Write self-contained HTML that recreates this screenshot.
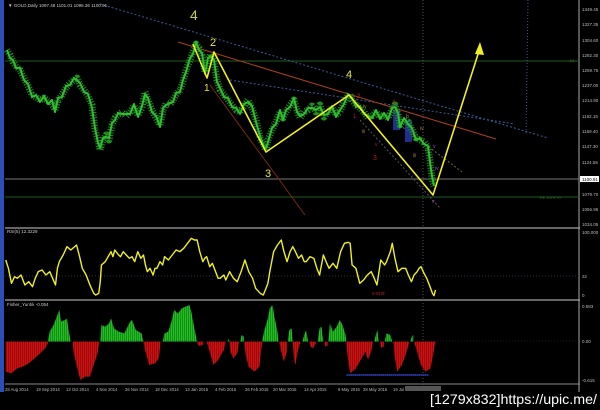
<!DOCTYPE html>
<html><head><meta charset="utf-8"><style>
html,body{margin:0;padding:0;background:#000;width:600px;height:410px;overflow:hidden}
svg{display:block}
text{font-family:"Liberation Sans",sans-serif}
</style></head><body>
<svg width="600" height="410" viewBox="0 0 600 410" xmlns="http://www.w3.org/2000/svg">
<defs>
<pattern id="stripes" width="2" height="4" patternUnits="userSpaceOnUse"><rect x="0" y="0" width="0.6" height="4" fill="#000" opacity="0.45"/></pattern>
</defs>
<rect width="600" height="410" fill="#000"/>
<rect x="0" y="0" width="4" height="392" fill="#2b4fb8"/>
<line x1="5" y1="228" x2="580" y2="228" stroke="#888" stroke-width="1.5"/>
<line x1="5" y1="300" x2="580" y2="300" stroke="#888" stroke-width="1.5"/>
<line x1="5" y1="384" x2="580" y2="384" stroke="#888" stroke-width="1"/>
<line x1="579" y1="0" x2="579" y2="392" stroke="#aaa" stroke-width="1"/>
<line x1="5" y1="61" x2="579" y2="61" stroke="#1f5a1f" stroke-width="1"/>
<line x1="5" y1="179" x2="579" y2="179" stroke="#777" stroke-width="1"/>
<line x1="5" y1="197" x2="579" y2="197" stroke="#1f5a1f" stroke-width="1"/>
<line x1="100" y1="4" x2="548" y2="138" stroke="#3a5a9a" stroke-width="1" stroke-dasharray="2,2"/>
<line x1="230" y1="80" x2="515" y2="124" stroke="#3a5a9a" stroke-width="1" stroke-dasharray="2,2"/>
<line x1="423" y1="0" x2="423" y2="392" stroke="#555" stroke-width="1" stroke-dasharray="1,2"/>
<polyline points="528,0 526,135" fill="none" stroke="#3a5a9a" stroke-width="1" stroke-dasharray="1,2"/>
<line x1="360" y1="120" x2="440" y2="208" stroke="#555" stroke-width="1" stroke-dasharray="2,2"/>
<line x1="400" y1="125" x2="462" y2="172" stroke="#6a6a30" stroke-width="1" stroke-dasharray="2,2"/>
<line x1="178" y1="42" x2="496" y2="139" stroke="#b0401a" stroke-width="1"/>
<line x1="210" y1="85" x2="305" y2="215" stroke="#7a2a10" stroke-width="1"/>
<rect x="393" y="110" width="7" height="20" fill="#2a3ab0" opacity="0.8"/>
<rect x="405" y="120" width="7" height="22" fill="#2a3ab0" opacity="0.8"/>
<g fill="none" stroke-linejoin="round">
<polyline stroke="#1a901a" stroke-width="7" stroke-dasharray="1,1.6" points="7,50 10,55 13,62 16,66 20,70 24,78 28,86 32,95 36,97 40,100 44,98 48,101 52,103 55,110 58,100 62,95 66,88 70,83 74,80 77,78 80,85 84,90 88,96 92,105 95,130 98,140 100,150 103,140 106,135 109,140 112,125 115,118 118,115 122,112 126,116 130,112 134,106 138,115 142,108 145,92 148,100 152,110 156,118 160,125 163,110 166,103 170,105 173,100 176,95 180,90 183,82 186,70 190,60 193,52 196,44 199,48 202,55 205,72 208,60 211,54 214,62 217,80 220,90 224,95 228,100 232,105 236,110 240,112 244,106 248,100 252,108 256,120 260,138 264,145 266,150 268,140 272,130 276,122 280,112 283,118 286,112 290,105 294,100 297,110 300,118 304,112 308,110 312,106 316,112 320,105 324,117 328,112 332,108 336,115 340,112 344,102 348,96 350,94 352,100 356,105 360,108 364,112 368,118 372,116 376,112 380,117 384,115 388,118 392,110 395,105 398,115 400,125 404,120 408,122 412,130 416,138 420,140 424,142 428,148 430,160 432,178 434,186"/>
<polyline stroke="#2fc02f" stroke-width="2" points="7,50 10,58 13,60 16,68 20,68 24,80 28,84 32,97 36,95 40,102 44,96 48,104 52,100 55,112 58,98 62,97 66,86 70,85 74,78 77,80 80,83 84,92 88,94 92,108 95,128 98,143 100,148 103,138 106,137 109,138 112,123 115,120 118,113 122,114 126,114 130,114 134,104 138,117 142,106 145,94 148,98 152,112 156,116 160,127 163,108 166,105 170,103 173,102 176,93 180,92 183,80 186,72 190,58 193,54 196,42 199,50 202,53 205,74 208,58 211,56 214,60 217,82 220,88 224,97 228,98 232,107 236,108 240,114 244,104 248,102 252,106 256,122 260,136 264,147 266,148 268,142 272,128 276,124 280,110 283,120 286,110 290,107 294,98 297,112 300,116 304,114 308,108 312,108 316,110 320,107 324,115 328,114 332,106 336,117 340,110 344,104 348,94 350,96 352,98 356,107 360,106 364,114 368,116 372,118 376,110 380,119 384,113 388,120 392,108 395,107 398,113 400,127 404,118 408,124 412,128 416,140 420,138 424,144 428,146 430,162 432,176 434,186"/>
</g>
<polyline fill="none" stroke="#f0f020" stroke-width="1.6" stroke-linejoin="round" points="193,44 207,78 214,52 266,152 349,95 433,195 480,48"/>
<polygon points="480,42 475,54 484,55" fill="#f0f020"/>
<text x="190" y="20" font-size="14" fill="#c9cf3a">4</text>
<text x="210" y="46" font-size="11" fill="#e8e830">2</text>
<text x="204" y="91" font-size="10" fill="#e8e830">1</text>
<text x="265" y="177" font-size="11" fill="#e8e830">3</text>
<text x="346" y="78" font-size="11" fill="#e8e830">4</text>
<text x="357" y="98" font-size="6" fill="#b02020">2</text>
<text x="353" y="118" font-size="6" fill="#b02020">1</text>
<text x="373" y="160" font-size="7" fill="#b02020">3</text>
<text x="392" y="104" font-size="6" fill="#b02020">4</text>
<text x="363" y="108" font-size="5" fill="#a08040">iv</text>
<text x="362" y="133" font-size="5" fill="#a08040">iii</text>
<text x="375" y="146" font-size="5" fill="#b02020">v</text>
<text x="406" y="118" font-size="5" fill="#a08040">b</text>
<text x="420" y="130" font-size="5" fill="#a08040">iv</text>
<text x="413" y="157" font-size="5" fill="#a08040">iii</text>
<text x="433" y="148" font-size="5" fill="#a050c0">v</text>
<text x="435" y="170" font-size="5" fill="#a050c0">iv</text>
<text x="432" y="203" font-size="5" fill="#a050c0">v</text>
<text x="8" y="7" font-size="4.5" fill="#ccc">▼ GOLD,Daily  1097.48 1101.01 1096.36 1100.91</text>
<g font-size="4.5" fill="#bbb">
<text x="582" y="11">1349.45</text><text x="582" y="26">1327.35</text><text x="582" y="42">1304.60</text><text x="582" y="57">1282.30</text><text x="582" y="72">1259.75</text><text x="582" y="87">1237.00</text><text x="582" y="102">1214.90</text><text x="582" y="118">1192.15</text><text x="582" y="133">1169.40</text><text x="582" y="148">1147.30</text><text x="582" y="164">1124.55</text><text x="582" y="196">1079.70</text><text x="582" y="211">1056.95</text><text x="582" y="226">1034.05</text>
<text x="582" y="234">100.000</text><text x="582" y="278">32</text><text x="582" y="297">0</text>
<text x="582" y="308">0.583</text><text x="582" y="343">0.00</text><text x="582" y="382">-0.615</text>
</g>
<rect x="580" y="176" width="19" height="6" fill="#fff"/>
<text x="582" y="181" font-size="4.5" fill="#000">1100.91</text>
<text x="570" y="62" font-size="4" fill="#2a7a2a">61</text>
<text x="540" y="199" font-size="4" fill="#2a7a2a">FE 1079.70</text>
<text x="7" y="233" font-size="4.5" fill="#ccc">RSI(5) 12.3229</text>
<line x1="5" y1="276" x2="579" y2="276" stroke="#334" stroke-width="1" stroke-dasharray="1,2"/>
<g transform="translate(0,225) scale(0.3827,0.3333)">
<polyline vector-effect="non-scaling-stroke" fill="none" stroke="#f0f020" stroke-width="1.4" stroke-linejoin="round" points="15,105 22,130 30,175 38,155 45,160 55,150 65,180 75,170 85,185 92,160 100,140 110,135 120,150 130,140 145,180 150,130 155,110 165,90 175,65 185,75 200,60 208,95 215,130 225,150 235,180 245,205 250,210 258,205 262,170 265,120 275,110 290,80 295,95 300,75 310,90 315,95 322,80 330,90 338,100 345,95 352,110 360,80 368,100 375,90 380,120 385,140 392,130 400,150 405,130 410,130 418,110 425,120 430,95 440,105 450,90 460,75 470,80 480,70 490,55 500,40 508,45 515,45 522,80 530,110 535,100 540,95 548,125 555,115 560,130 570,160 575,160 585,150 590,165 600,140 610,160 620,170 630,140 640,105 650,140 660,160 668,190 680,205 688,210 695,190 700,175 705,140 715,80 725,60 735,45 742,80 750,110 758,80 765,65 772,80 780,100 788,90 795,110 800,110 810,95 820,100 828,130 835,150 840,120 845,90 852,110 860,130 870,115 880,130 890,80 900,55 910,52 915,55 920,120 930,130 940,175 950,165 960,150 970,140 978,160 985,180 995,105 1005,120 1010,110 1020,80 1025,55 1032,100 1040,140 1050,130 1060,130 1067,150 1075,170 1082,150 1090,140 1095,130 1100,125 1108,145 1115,160 1122,180 1130,205 1134,212 1138,195"/>
<g fill="#d01010">
<polygon points="15,350 15,440 30,445 45,430 60,425 75,415 90,400 105,385 118,370 125,355 125,350"/>
<polygon points="190,350 192,380 200,420 210,465 222,455 235,455 245,420 255,385 260,350"/>
<polygon points="375,350 380,380 390,420 405,415 415,400 420,350"/>
<polygon points="515,350 518,362 530,360 532,350"/>
<polygon points="540,350 548,380 558,420 570,405 585,375 590,350"/>
<polygon points="600,350 602,380 610,400 620,385 625,350"/>
<polygon points="638,350 642,390 650,425 665,440 678,425 685,350"/>
<polygon points="730,350 735,380 742,410 750,380 750,350"/>
<polygon points="765,350 768,400 772,420 778,380 785,350"/>
<polygon points="808,350 812,365 818,370 825,355 825,350"/>
<polygon points="848,350 850,365 856,362 856,350"/>
<polygon points="905,350 908,390 915,445 930,430 945,400 955,380 962,405 970,380 975,350"/>
<polygon points="993,350 996,368 1003,365 1003,350"/>
<polygon points="1028,350 1032,400 1038,440 1050,420 1060,390 1070,350"/>
<polygon points="1082,350 1090,380 1100,420 1112,440 1125,430 1135,370 1138,350"/>
</g>
<g fill="#20c020">
<polygon points="125,350 130,320 140,300 150,270 155,255 160,290 170,285 175,280 180,320 185,350"/>
<polygon points="262,350 265,300 275,305 285,295 290,280 298,310 310,320 325,325 340,290 345,285 355,315 370,325 375,350"/>
<polygon points="425,350 430,325 440,320 448,290 455,255 465,265 475,250 485,245 495,240 500,260 508,310 515,350"/>
<polygon points="595,350 597,340 600,350"/>
<polygon points="628,350 631,330 637,335 637,350"/>
<polygon points="685,350 690,320 700,280 705,250 712,240 718,280 725,320 728,350"/>
<polygon points="752,350 756,315 762,310 765,350"/>
<polygon points="790,350 795,330 800,315 805,350"/>
<polygon points="830,350 835,310 840,305 845,350"/>
<polygon points="858,350 862,295 870,320 880,305 888,285 895,300 903,330 905,350"/>
<polygon points="978,350 982,330 986,315 990,350"/>
<polygon points="1005,350 1010,325 1020,330 1025,350"/>
<polygon points="1072,350 1076,335 1080,330 1080,350"/>
</g>
<line vector-effect="non-scaling-stroke" x1="905" y1="450" x2="1120" y2="450" stroke="#3040c0" stroke-width="1.5"/>
</g>
<rect x="5" y="302" width="435" height="80" fill="url(#stripes)"/>
<line x1="5" y1="341" x2="579" y2="341" stroke="#334" stroke-width="0.6" stroke-dasharray="1,2"/>
<text x="7" y="306" font-size="4.5" fill="#ccc">Fisher_Yur4ik -0.054</text>
<text x="372" y="295" font-size="5" fill="#b02020">v-end</text>
<g font-size="4.2" fill="#bbb">
<text x="5" y="391">28 Aug 2014</text><text x="36" y="391">19 Sep 2014</text><text x="66" y="391">13 Oct 2014</text><text x="96" y="391">4 Nov 2014</text><text x="125" y="391">26 Nov 2014</text><text x="155" y="391">18 Dec 2014</text><text x="185" y="391">13 Jan 2015</text><text x="215" y="391">4 Feb 2015</text><text x="245" y="391">26 Feb 2015</text><text x="273" y="391">20 Mar 2015</text><text x="304" y="391">14 Apr 2015</text><text x="338" y="391">6 May 2015</text><text x="363" y="391">28 May 2015</text><text x="393" y="391">19 Jul</text>
</g>
<rect x="405" y="386" width="36" height="5" fill="#555"/>
<text x="430" y="404" font-size="14" fill="#fff" font-family="Liberation Mono,monospace" textLength="167" lengthAdjust="spacingAndGlyphs">[1279x832]https://upic.me/</text>
</svg>
</body></html>
